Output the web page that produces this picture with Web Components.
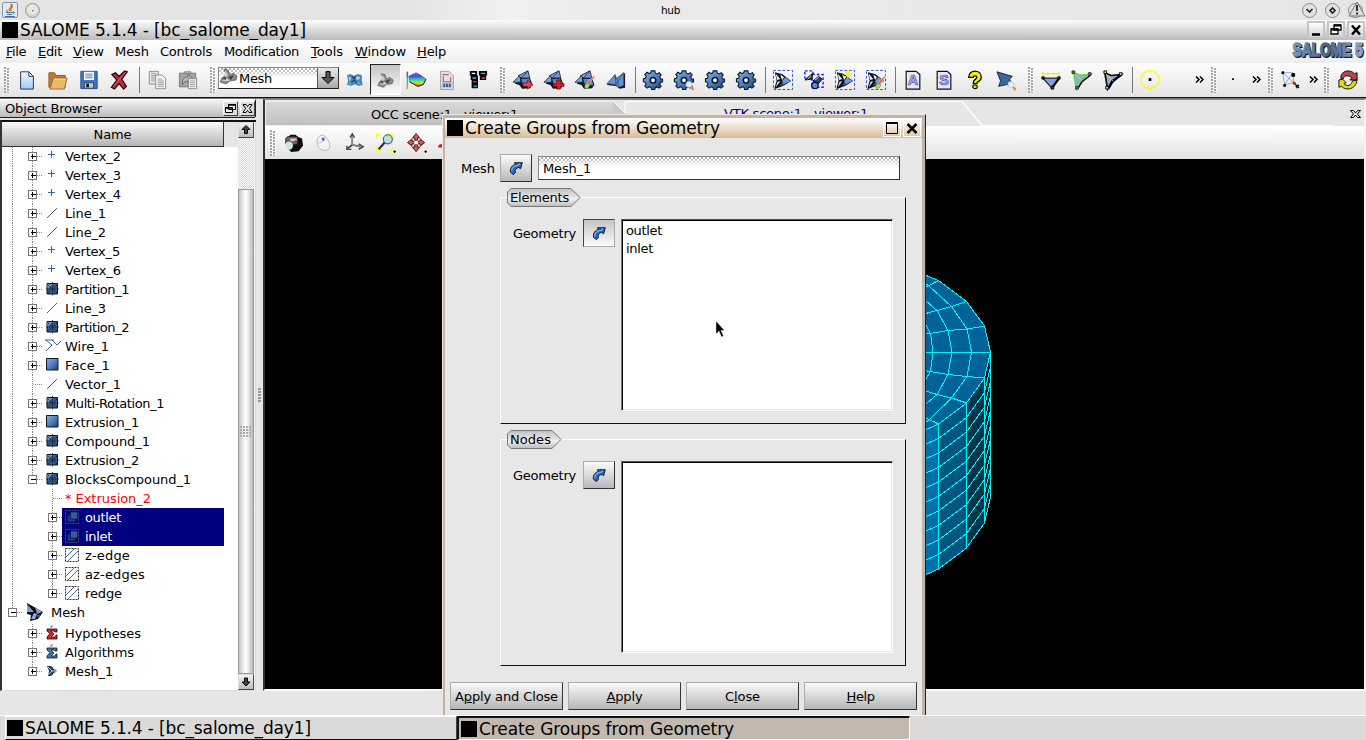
<!DOCTYPE html>
<html lang="en">
<head>
<meta charset="utf-8">
<title>SALOME 5.1.4 - [bc_salome_day1]</title>
<style>
html,body{margin:0;padding:0}
body{width:1366px;height:740px;overflow:hidden;background:#e6e6e6;color:#000;font:13px/19px "DejaVu Sans",sans-serif;position:relative}
</style>
</head>
<body>
<salome-app></salome-app>
<script>
const define=(name,css,html,after)=>customElements.define(name,class extends HTMLElement{
  connectedCallback(){
    if(this.shadowRoot)return;
    const r=this.attachShadow({mode:'open'});
    r.innerHTML='<style>*{box-sizing:border-box}'+css+'</style>'+(typeof html==='function'?html(this):html);
    if(after)after(this,r);
  }
});

/* ---------- icon drawings, all on a 22 x 22 grid ---------- */
const defs='<defs><linearGradient id="b" x1="0" y1="0" x2="1" y2="1"><stop stop-color="#86b2e6"/><stop offset=".55" stop-color="#4f7bb5"/><stop offset="1" stop-color="#1c3b66"/></linearGradient><linearGradient id="p" x1="0" y1="0" x2="0" y2="1"><stop stop-color="#f6fbff"/><stop offset="1" stop-color="#9cc8fa"/></linearGradient><linearGradient id="rb" x1="0" y1="0" x2="0" y2="1"><stop stop-color="#e040c0"/><stop offset=".25" stop-color="#3050f0"/><stop offset=".5" stop-color="#20d8b0"/><stop offset=".75" stop-color="#c8e820"/><stop offset="1" stop-color="#f03020"/></linearGradient></defs>';
const solid='<path d="M2 15L9 7l9 .5 3 8-2 4.500-9 .5-3-4z" fill="#0c1626"/><path d="M0 13.500L8 5.500 8.500 13.500z" fill="#7ba4da" stroke="#16243c" stroke-width=".9"/><path d="M5.500 6.500L16.500 .8 18.500 9 9.500 8.800z" fill="#6f9cd8" stroke="#101c30" stroke-width=".9"/><path d="M8.500 9.500l9.500-.5 3 8-10 1z" fill="#5b86c0" stroke="#101c30" stroke-width=".9"/><path d="M16 1.500l-6.500 7" stroke="#1c2c48" stroke-width=".9"/>';
const gear='<path d="M9 1h4l.6 2.500 2 .9L18 3l2 2.600-1.500 2 .7 2L21.500 10v3l-2.300.7-.8 2L20 18l-2.500 2-2.100-1.400-2 .9L13 21.500H9.500l-.6-2.200-2-.9L4.500 20 2 17.700l1.400-2.200-.8-2L.5 13V9.600L2.700 9l.9-2L2 5l2.300-2.500 2.200 1.400 2-.8z" fill="url(#b)" stroke="#0b1a30" stroke-width="1.200"/><circle cx="11" cy="11.300" r="3" fill="#f4f4f4" stroke="#0b1a30" stroke-width="1.800"/>';
const dashed='<path d="M.5.5h21v21H.5z" fill="none" stroke="#2844cc" stroke-dasharray="3 2"/>';
const arrowMesh='<path d="M2 2.500l8 2 10 7.500-8 5-9 3.500H1.500l2.500-9z" fill="#0c1420"/><path d="M3 4l5 6-3.500 1zM3 19l2-6 3-.5z" fill="#e8eef8"/><path d="M8 5l4 3-2 3z" fill="#fff"/><path d="M10 12l3.500-4 6 4-8 4z" fill="#6e98d4"/><path d="M7 17l4-3 2 1.500z" fill="#4c74b0"/>';
const brush='<path d="M12 17l2-4 7-7 1 1-6 8-2 4z" fill="#e45c5c" stroke="#fff" stroke-width=".5"/><path d="M11 20c-1-5 2-6 5-4 0 3-2 5-5 4z" fill="#a8dc60" stroke="#5c8830" stroke-width=".6"/>';
const lens='<path d="M19 18.500l2.500 3.500" stroke="#ef8030" stroke-width="2.500"/><circle cx="16.500" cy="16" r="3" fill="#dff2ff" stroke="#c4d4e0" stroke-width="1.200"/>';
const I={
 new:'<path d="M4 2h9l5 5v14H4z" fill="url(#p)" stroke="#1a2a50"/><path d="M13 2v5h5z" fill="#fff" stroke="#1a2a50"/>',
 open:'<path d="M1 3h6l2 3h10v13H1z" fill="#b87c2c" stroke="#8a5a1c"/><path d="M6 9h15l-3 12H2z" fill="#e8b868" stroke="#9a6a28"/><path d="M6.500 10h13" stroke="#ffe2a4"/>',
 save:'<path d="M2 1.500h18v19h-18z" fill="#3b76bd" stroke="#1d4a85"/><path d="M5.500 2h11v9h-11z" fill="#f2f7ff"/><path d="M7 4.500h8M7 6.500h8M7 8.500h8" stroke="#5580b0"/><path d="M6 14h10v6H6z" fill="#c8ccc8" stroke="#284878"/><path d="M8 15h3v4H8z" fill="#111"/>',
 del:'<path d="M2 5l4-2 4 4 6-6 3 1-6 8 5 8-3 3-5-6-5 6-3.500-2L7.500 11z" fill="#b82c3c" stroke="#20080c" stroke-width="1.300"/><path d="M3.500 18.500L17 2.500" stroke="#e07880" stroke-width=".8"/>',
 copy:'<g fill="#e6e6e6" stroke="#8a8a8a"><path d="M2.500 1.500h10v14h-10z"/><path d="M9.500 5.500h7l4 4v11h-11z" fill="#f4f4f4"/></g><path d="M4.500 4h6M4.500 6h6M4.500 8h4M4.500 10h4M4.500 12h4M11.500 10h5M11.500 12h7M11.500 14h7M11.500 16h7M11.500 18h7" stroke="#999"/>',
 paste:'<path d="M1.500 3.500h18v15h-18z" fill="#a4a4a4" stroke="#777"/><path d="M7 4V2h7v2z" fill="#ccc" stroke="#777"/><path d="M5 16c-1-7 3-9 6-8V5l6 5-6 5v-3c-3 0-4 1-6 4z" fill="#bbb" stroke="#666"/><path d="M11.500 9.500h9v11h-9z" fill="#f2f2f2" stroke="#888"/><path d="M13 12h6M13 14h6M13 16h6M13 18h6" stroke="#999"/>',
 geo:'<path d="M4 6l3-1 4 2 4-2 4 1v6l1 4-4 1-4-2-4 2-4-1 1-4z" fill="#4f86b8" stroke="#34648c" stroke-width=".8"/><path d="M5 7l3 2-2 4zM14 7l4 1-2 3-3-1z" fill="#a8d4f2"/><path d="M4 16l3-3 2 3zM14 15l2-3 3 4z" fill="#48b4d4"/><path d="M8 14l3-3 3 3M9 7l2 3 2-3" stroke="#1c4064" fill="none" stroke-width="1.200"/>',
 meshg:'<path d="M7 4l4 1 2 5 3-2 4 3-1 4-6 1-4 3-6-2 2-4 4-3z" fill="#8c8c8c" stroke="#555" stroke-width=".7"/><path d="M8 5l3 5-3 3zM5 16l5-3 3 3z" fill="#d0d0d0"/><path d="M11 12l6-2-3 5zM5 13l4-1v3z" fill="#444"/>',
 visu:'<path d="M1.500 2v19" stroke="#20c0a0" stroke-width="1.500"/><path d="M1.500 2v6" stroke="#b030d0" stroke-width="1.500"/><path d="M1.500 16v5" stroke="#f0a020" stroke-width="1.500"/><path d="M3 7l8-4 4 2 7 5-3 6-6 2-9-5z" fill="url(#rb)" stroke="#333" stroke-width=".5"/><path d="M4 13l9 5 6-2 3-6" stroke="#222" fill="none"/>',
 med:'<path d="M4 1.500h9l5 5v15H4z" fill="#dfe2e8" stroke="#999"/><path d="M6 5h7M7 7v6h8V8" stroke="#c0605c" stroke-width="1.300" fill="none"/><path d="M5 14h12v6H5z" fill="#b8c8dc"/><path d="M7 17h9" stroke="#3450a0" stroke-width="3.500" stroke-dasharray="2 1"/>',
 yacs:'<path d="M2 1h8v5H2zM12 1h9v5h-9zM3 6h8v5H3zM13 6h7v5h-7zM4 11h7v4H4zM4 15h7v5H4z" fill="#000"/><path d="M4 3h4v1.500H4z" fill="#fff"/><path d="M14 3h5v1.500h-5zM5 8h4v1.500H5zM6 17h4v1.500H6z" fill="#38b0ff"/><path d="M15 8h4v1.500h-4zM5.500 12h4v1.500h-4z" fill="#f04038"/>',
 m1:solid+'<path d="M11 14h5v-3l6 5-6 5v-3h-5z" fill="#e04848" stroke="#701010" stroke-width=".8"/>',
 m2:solid+'<path d="M14 11h4v4h4v3h-4v3h-4v-3h-4v-3h4z" fill="#e02028" stroke="#600" stroke-width=".8"/>',
 m3:solid+brush,
 m4:'<path d="M1 16.500L11 6l1 5 9-8v16.500l-6 1-4-3z" fill="#0f1a2c"/><path d="M1 15L10 5l.5 5L19.500 3v14l-6 2-3.500-3z" fill="#6491cf" stroke="#2c4468" stroke-width=".8"/><path d="M10 5l1 11M19 3l-8 13M12 9l2 9" stroke="#2c4468" fill="none" stroke-width=".8"/>',
 g1:gear,g2:gear+lens,
 sel1:dashed+arrowMesh,
 sel2:'<path d="M1 1h9v8H1z" fill="none" stroke="#2020e8" stroke-width="1.500" stroke-dasharray="3 2"/><path d="M9 5h12v14H9z" fill="#eef" stroke="#2020e8" stroke-width="1.500" stroke-dasharray="3 2"/><path d="M1 11l8-7v6zM10 12l6-5 4 3-4 5z" fill="#2b4770" stroke="#000"/><path d="M4 10l4-4M12 11l4-3" stroke="#d8e4f8"/><circle cx="12" cy="17" r="3.500" fill="#5c98cc" stroke="#00105c" stroke-width="1.500"/>',
 sel3:dashed+arrowMesh+'<path d="M14 0v9M9.500 4.500h9M11 1l6 7M17 1l-6 7" stroke="#f4ee28" stroke-width="1.200"/>',
 sel4:dashed+arrowMesh+brush,
 A:'<path d="M3.500 1.500h11l4 3.500v16h-15z" fill="#e6e6f6" stroke="#111" stroke-width="1.300"/><text x="11" y="17" text-anchor="middle" font-family="Liberation Sans" font-weight="bold" font-size="16" fill="#b4b8f0" stroke="#5050a8" stroke-width=".8">A</text>',
 S:'<path d="M3.500 1.500h11l4 3.500v16h-15z" fill="#e6e6f6" stroke="#111" stroke-width="1.300"/><text x="11" y="17" text-anchor="middle" font-family="Liberation Sans" font-weight="bold" font-size="16" fill="#b4b8f0" stroke="#5050a8" stroke-width=".8">S</text>',
 help:'<path d="M4 8c0-9 14-9 14 0 0 5-5 4-5 7H9c0-6 4-4 4-7 0-2-4-2-4 0z" fill="#f0f000" stroke="#000" stroke-width="1.400"/><ellipse cx="11" cy="18.500" rx="2.500" ry="2" fill="#f0f000" stroke="#000" stroke-width="1.200"/>',
 whats:'<path d="M1 2l17 5-3 3 3 7-6-1-9 2 2-6z" fill="#3d6799" stroke="#13253d"/>'+lens,
 q1:'<path d="M2 9h18l-8 11z" fill="#7ba3dc" stroke="#222" stroke-width="1.300"/><path d="M20 9l-8 11" stroke="#000" stroke-width="2.500"/><path d="M2 2v5M2 4h18M20 2v5M8 3v3M14 3v3" stroke="#eeee00" fill="none" stroke-width="1.300"/><g fill="#444" stroke="#000"><path d="M1 7.500h2.500v2.500H1zM18.500 7.500h2.500v2.500h-2.500zM11 18h3v3h-3z"/></g>',
 q2:'<path d="M2 3l7 3 11-1-10 7-5 9z" fill="#8aaede" stroke="#6fd040" stroke-width="2"/><path d="M20 6l-9 7-5 8" stroke="#000" fill="none" stroke-width="1.500"/><path d="M3 4l8 8" stroke="#e8d040"/><path d="M0 1h3v3H0zM18 3h3v3h-3zM4 18h3v3H4z" fill="#666" stroke="#333"/>',
 q3:'<path d="M2 3l7 3 11-1-10 7-5 9z" fill="#8aaede" stroke="#000" stroke-width="1.800"/><path d="M20 6l-9 7-5 8" stroke="#000" fill="none" stroke-width="1.500"/><path d="M3 4l8 8" stroke="#e8d040"/><path d="M1 1h3v3H1zM18 3h3v3h-3zM3 18h3v3H3z" fill="#d8d8a0" stroke="#000"/>',
 pt:'<circle cx="11" cy="10.500" r="10" fill="none" stroke="#fafa00" stroke-width="1.300"/><path d="M9.500 9h3v3h-3z"/>',
 dot:'<path d="M10 9h2v2h-2z"/>',
 net:'<path d="M2 3h11l1 11-10 2zM2 3l12 11M13 3L4 16" fill="none" stroke="#78a8dc"/><path d="M1 2h2v2H1zM12 4h3v3h-3zM3 16h2v2H3z" stroke="#000"/><path d="M13 13h3v3h-3z" fill="#f00"/><path d="M15 15l5 5m-4-2l4-1m-3 3l2-4" stroke="#000" stroke-width="1.200"/>',
 refresh:'<path d="M3 9C3 0 14-1 18 4l3-1v8h-8l2.500-2.500C12 6 7 5 6 9.500z" fill="#b84848" stroke="#000"/><path d="M21 11c-1 11-13 12-17 7l-3 1v-8l4-1 4 4-2.500 1c4 4 8 2 9.500-3z" fill="#dede18" stroke="#000"/>',
 camera:'<path d="M5 6l3-4h6l2 2 5 2 1 8-5 6-8 1-5-5z" fill="#0a0a0a"/><path d="M3 6l2-2h11v8l-9 2-4-2z" fill="#666" stroke="#222"/><circle cx="6.500" cy="14" r="4" fill="#cbe4ea" stroke="#eee" stroke-width=".8"/><path d="M8 6h7v3H8z" fill="#ccc"/><path d="M13 8h3v2h-3z" fill="#d22"/>',
 mouse:'<path d="M4 6c3-6 9-4 12 3 4 8-1 11-6 10S2 12 4 6z" fill="#f4f4f6" stroke="#b0b0b0"/><path d="M5 11c4 0 7-3 7-7" stroke="#bbb" fill="none"/><path d="M9 5.500l2 3" stroke="#4868c0" stroke-width="2.500"/>',
 axes:'<path d="M8 2v11l9 2M8 13l-5 4" stroke="#333" stroke-width="1.800" fill="none"/><path d="M5.500 5L8 1l2.500 4M15 12l5 3-5 3M2 14v4h5" fill="none" stroke="#3c4638" stroke-width="1.500"/><path d="M8 3v10l8 2" stroke="#d0d8b8" fill="none" stroke-width=".8"/>',
 fit:'<path d="M1 6V1.500h4M15 1.500h4v4M1 15v4h4M15 19h4v-3" stroke="#ff0" stroke-width="1.500" fill="none"/><path d="M10 10l-7 8" stroke="#333" stroke-width="2.500"/><circle cx="13" cy="7" r="5" fill="#b8dce4" stroke="#45606a" stroke-width="1.200"/><path d="M19 20.500h3M20.500 19v3" stroke="#000"/>',
 pan:'<g fill="#d05858" stroke="#401010"><path d="M10 .5l4 5h-2.500v3h-3v-3H6zM10 20.500l4-5h-2.500v-3h-3v3H6zM.5 10.500l5-4v2.500h3v3h-3v2.500zM19.500 10.500l-5-4v2.500h-3v3h3v2.500z"/></g><path d="M8 8.500h4v4H8z" fill="#fff"/><path d="M19 20.500h3M20.500 19v3" stroke="#000"/>',
 rot:'<path d="M0 15l2-3 5 1v3H0z" fill="#c22"/>',
 pick:'<path d="M6 20L2 16C1.500 10 5 6 9.500 5L8 2.500h11.500L17 11.500l-2.500-2C11 10 8 13 9.500 17z" fill="#2e66b8" stroke="#060c18" stroke-width="1.300"/><path d="M4 15c0-5 3-8 9-8.500l3-2.500" stroke="#6cb4fa" stroke-width="1.800" fill="none"/>',
 vertex:'<path d="M10.500 6v7M7 9.500h7" stroke="#3c648c" shape-rendering="crispEdges"/>',
 line:'<path d="M6 16L16 6" stroke="#4c6484" fill="none"/>',
 part:'<path d="M6 5.500h10.500v10.500H6z" fill="#365c8c" stroke="#0a1424"/><path d="M6.500 6h5l-5 5z" fill="#7897bc"/><path d="M7 7l9 8M16 7L7 15M5 11h13M11.500 4v14" stroke="#0e1b2c" fill="none" stroke-width=".8" stroke-dasharray="2 .7"/>',
 wire:'<path d="M4 5h9M5 5l6 5-6 6M11 5l5 5 4-4" fill="none" stroke="#3c648c"/>',
 face:'<path d="M5.500 4.500h11.500v11.500h-11.500z" fill="url(#b)" stroke="#0c1c30"/>',
 group:'<path d="M4.500 4.500h13v13h-13z" fill="none" stroke="#444a70" stroke-dasharray="2 1"/><path d="M6.500 9h8v7h-8z" fill="#1c3874" stroke="#0a1450" stroke-width=".6"/><path d="M9.500 6h7v7h-7z" fill="#3459a0" stroke="#0a1450" stroke-width=".7"/>',
 edge:'<path d="M4.500 4.500h13v13h-13z" fill="none" stroke="#333" stroke-dasharray="2 1"/><path d="M5 13l8-8M7 17L17 7" stroke="#4c6c94"/>',
 meshroot:'<path d="M4 2l7 4 9 5-5 7-8 2 1-6-4-1z" fill="#0a0e14"/><path d="M4 3l7 8H4zM12 6l7 5-5 2z" fill="#7ea0cc"/><path d="M8 18l3-6 3 1-2 5z" fill="#8cb0dc"/><path d="M14 14h4l-3 4z" fill="#3a5c88"/>',
 hyp:'<path d="M6 7h10v3h-2l-1-1h-3l3 3-3 3h4l1-2h1v4H6v-2l3-3.500-3-2.500z" fill="#c62c2c" stroke="#2c0808" stroke-width=".8"/><path d="M10 6V4h2" stroke="#777" fill="none"/>',
 alg:'<path d="M6 7h10v3h-2l-1-1h-3l3 3-3 3h4l1-2h1v4H6v-2l3-3.500-3-2.500z" fill="#3e78ae" stroke="#0a1830" stroke-width=".8"/><path d="M10 6V4h2" stroke="#777" fill="none"/>',
 mesh1:'<path d="M6 6h4l6 5-6 5H7l1-5z" fill="#2a3a50"/><path d="M7 7l4 4-4 4M12 8l4 3-4 3M11 11h4" stroke="#b8cce8" fill="none"/>'
};
define('ui-icon',':host{display:block;width:22px;height:22px;flex:none}svg{display:block;overflow:visible;width:100%;height:100%}',
  e=>`<svg viewBox="0 0 22 22" fill="none">${defs}<g fill="#000">${I[e.getAttribute('name')]||''}</g></svg>`);

/* label spread evenly over a given advance width */
define('ui-text',':host{display:block;white-space:nowrap;flex:none}span{display:inline-block;white-space:pre}','<span><slot></slot></span>',(e,r)=>{
  const w=+e.getAttribute('w'),s=r.querySelector('span');
  if(w){const n=e.textContent.length,k=s.getBoundingClientRect().width;s.style.letterSpacing=((w-k)/n).toFixed(3)+'px';}
});

define('tool-btn',':host{display:flex;width:31px;height:31px;align-items:center;justify-content:center;flex:none}ui-icon{width:20px;height:20px;margin-right:1px}:host([on]){border:1px solid;border-color:#222 #fff #fff #222;background:linear-gradient(#c4c4c4,#fdfdfd)}',
  e=>`<ui-icon name="${e.getAttribute('i')}"></ui-icon>`);
define('tool-sep',':host{display:block;width:6px;height:26px;flex:none;background:linear-gradient(#777,#777) 3px 0/1px 100% no-repeat}','');
define('tool-grip',':host{display:block;width:6px;height:26px;flex:none}svg{display:block}',
  '<svg width="6" height="26" shape-rendering="crispEdges"><path d="M2 1v25M5 2v24" stroke="#fff" stroke-width="2" stroke-dasharray="2 1"/><path d="M1 0v26M4 1v25" stroke="#a4a4a4" stroke-width="2" stroke-dasharray="2 1"/></svg>');
define('tool-more',':host{display:flex;width:12px;flex:none;height:20px}svg{margin:auto}','<svg width="9" height="7" fill="none" stroke="#000" stroke-width="1.500"><path d="M1 .5l3 3-3 3M5 .5l3 3-3 3"/></svg>');
define('gap-x',':host{display:block;flex:none}','',e=>e.style.width=e.getAttribute('w')+'px');

define('hub-bar',':host{display:flex;height:20px;align-items:center;background:linear-gradient(90deg,#e4e4e4 30%,#f0f0f0 37%,#eaeaea 45%,#e6e6e6);position:relative;font:10.500px "DejaVu Sans",sans-serif}svg{display:block}.h{flex:1;display:flex;justify-content:center;padding-right:2px}',
`<gap-x w="2"></gap-x><svg width="17" height="17"><rect x=".5" y=".5" width="15" height="15" rx="1.500" fill="#dfe9f2" stroke="#7c9ab4"/><path d="M8 9c-3-3 3-3 1-7 4 3-2 4 0 7M5 8c-1 1 0 1 1 2" stroke="#e07020" fill="none" stroke-width="1.300"/><path d="M4 10.500h7M5 12.500h5M3 14.500h10M11 10q3 0 0 2" stroke="#456e98" fill="none"/></svg><gap-x w="6"></gap-x>
<svg width="16" height="17"><circle cx="7.500" cy="8.500" r="7" fill="#d4d4d4" stroke="#999"/><circle cx="7.500" cy="7.500" r="5" fill="#e8e8e8"/><path d="M7 8h1.500v1.500H7z" fill="#777"/></svg>
<div class="h"><ui-text w="19">hub</ui-text></div>
<svg width="64" height="19"><g fill="#e2e2e2" stroke="#888"><circle cx="7.500" cy="9.500" r="7"/><circle cx="30.500" cy="9.500" r="7"/><circle cx="53.500" cy="9.500" r="7"/></g><path d="M4.500 8l3 3 3-3M28 9.500l2.500-2.500 2.500 2.500-2.500 2.500z" fill="none" stroke="#222" stroke-width="1.600"/><path d="M55 1l8 14H47z" fill="#dadada" stroke="#777"/><path d="M55 4v6M55 11.500v2" stroke="#333" stroke-width="2"/></svg>`);

define('win-title',':host{display:flex;height:20px;align-items:center;background:linear-gradient(#fdfdfd,#bababa);font-size:17px;line-height:20px;padding:0 1px 0 2px}b{width:16px;height:16px;background:#000;margin-right:2px}.s{flex:1}.w{width:18px;height:18px;background:linear-gradient(#fff,#d0d0d0);border:2px solid #c4c4c4;margin-left:2px}svg{display:block}',
`<b></b><ui-text w="286">SALOME 5.1.4 - [bc_salome_day1]</ui-text><div class="s"></div>
<div class="w"><svg width="14" height="14"><path d="M3 11.500h8" stroke="#000" stroke-width="2.500"/></svg></div>
<div class="w"><svg width="14" height="14" fill="#f4f4f4" stroke="#000" stroke-width="1.300"><path d="M5 2h7v5H5zM2 6h7v5H2z"/><path d="M5 2.500h7M2 6.500h7" stroke-width="2"/></svg></div>
<div class="w"><svg width="14" height="14"><path d="M3 2.500l8 9M11 2.500l-8 9" stroke="#000" stroke-width="2.500"/></svg></div>`);

define('menu-bar',':host{display:flex;height:23px;background:linear-gradient(#fff,#ededed);line-height:23px}.logo{margin-left:auto;overflow:visible}',
`<gap-x w="6"></gap-x><ui-text w="20"><u>F</u>ile</ui-text><gap-x w="12"></gap-x><ui-text w="24"><u>E</u>dit</ui-text><gap-x w="11"></gap-x><ui-text w="31"><u>V</u>iew</ui-text><gap-x w="11"></gap-x><ui-text w="34">Mesh</ui-text><gap-x w="11"></gap-x><ui-text w="52">Controls</ui-text><gap-x w="12"></gap-x><ui-text w="75">Modification</ui-text><gap-x w="12"></gap-x><ui-text w="32"><u>T</u>ools</ui-text><gap-x w="12"></gap-x><ui-text w="51"><u>W</u>indow</ui-text><gap-x w="11"></gap-x><ui-text w="29"><u>H</u>elp</ui-text>
<svg class="logo" width="76" height="23"><defs><linearGradient id="l" x1="0" y1="0" x2="1" y2="0"><stop stop-color="#7894bc"/><stop offset=".5" stop-color="#53617a"/><stop offset="1" stop-color="#8ca8d4"/></linearGradient></defs><g font-family="Liberation Sans" font-weight="bold" font-size="18"><text x="3.500" y="17" textLength="70" lengthAdjust="spacingAndGlyphs" fill="#161a24" stroke="#161a24" stroke-width="1.800">SALOME 5</text><text x="2.500" y="16" textLength="70" lengthAdjust="spacingAndGlyphs" fill="url(#l)" stroke="url(#l)" stroke-width="1.500">SALOME 5</text></g></svg>`);

const dots='repeating-conic-gradient(#a8a8a8 0 25%,#fff 0 50%) 0 0/4px 4px';
define('module-combo',`:host{display:flex;width:121px;height:22px;margin-bottom:3px;flex:none;border:1px solid;border-color:#888 #333 #222 #888;background:#fff;position:relative}.t{position:absolute;inset:0 0 auto 0;height:10px;background:${dots};-webkit-mask:linear-gradient(#000,transparent);mask:linear-gradient(#000,transparent)}ui-icon{margin:-3px 0 0 -2px}ui-text{position:relative;line-height:21px}.b{margin-left:auto;width:21px;background:linear-gradient(#e8e8e8,#a8a8a8);border-left:1px solid #555;position:relative}`,
`<div class="t"></div><ui-icon name="meshg" style="position:relative"></ui-icon><ui-text w="33">Mesh</ui-text><div class="b"><svg width="19" height="20"><path d="M8 3.500h4v6h4L10 15.500 4 9.500h4z" fill="#555" stroke="#000"/></svg></div>`);

const tb=a=>a.split(' ').map(n=>`<tool-btn i="${n}"></tool-btn>`).join('');
define('main-toolbar',':host{display:flex;height:35px;align-items:center;background:linear-gradient(#fdfdfd,#e4e4e4);border-bottom:1px solid #111;padding-bottom:1px}',
`<gap-x w="4"></gap-x><tool-grip></tool-grip><gap-x w="2"></gap-x>${tb('new open save del')}<tool-sep></tool-sep>${tb('copy paste')}<gap-x w="6"></gap-x><tool-grip></tool-grip><gap-x w="2"></gap-x><module-combo></module-combo>${tb('geo')}<tool-btn i="meshg" on></tool-btn>${tb('visu med yacs')}<gap-x w="6"></gap-x><tool-grip></tool-grip><gap-x w="2"></gap-x>${tb('m1 m2 m3 m4')}<tool-sep></tool-sep>${tb('g1 g2 g1 g1')}<tool-sep></tool-sep>${tb('sel1 sel2 sel3 sel4')}<tool-sep></tool-sep>${tb('A S help whats')}<gap-x w="6"></gap-x><tool-grip></tool-grip><gap-x w="2"></gap-x>${tb('q1 q2 q3')}<tool-sep></tool-sep>${tb('pt')}<gap-x w="27"></gap-x><tool-more></tool-more><gap-x w="6"></gap-x><tool-grip></tool-grip><gap-x w="1"></gap-x>${tb('dot')}<gap-x w="1"></gap-x><tool-more></tool-more><gap-x w="6"></gap-x><tool-grip></tool-grip><gap-x w="2"></gap-x>${tb('net')}<tool-more></tool-more><gap-x w="5"></gap-x><tool-grip></tool-grip><gap-x w="3"></gap-x>${tb('refresh')}`);

/* ---------- object browser ---------- */
define('tree-row',':host{display:flex;height:19px;align-items:center;position:relative;flex:none}:host([lvl="0"]){height:21px}:host([lvl="0"]) .c{height:18px;align-self:flex-start}.g{flex:none;align-self:stretch;display:block}.c{display:flex;align-items:center;height:100%}ui-icon{margin:-1px 2px 0 -1px}:host([sel]) .c{background:#000080;color:#fff;flex:none;width:162px}:host([bad]) .c{color:#f00}',
e=>{
  const l=+e.getAttribute('lvl'),a=n=>e.hasAttribute(n),cx=l*20+10.5,W=l*20+20,H=l?19:21,m=9.5;
  let d='';
  if(a('root'))d+=`M10.5 0V${H}`;
  if(l===2||l===1){d+=`M${cx} 0V${a('last')?m:H}`;}
  if(l===0)d+=`M10.5 0V9`;
  d+=`M${cx} ${m}H${W+(l?0:2)}`;
  let x='';
  if(!a('leaf'))x=`<rect x="${cx-4}" y="${m-4}" width="8" height="8" fill="#fff" stroke="#777"/><path d="M${cx-2} ${m}h5${a('open')?'':`M${cx} ${m-2.500}v5`}" stroke="#000"/>`;
  const pre=l===0?20:l*20+20;
  return `<svg class="g" width="${pre}" height="${H}" shape-rendering="crispEdges"><path d="${d}" stroke="#888" stroke-dasharray="1 1" fill="none"/>${x}</svg><div class="c">${a('noicon')?'<gap-x w="3"></gap-x>':`${l===0?'<gap-x w="2"></gap-x>':''}<ui-icon name="${e.getAttribute('i')}"></ui-icon>`}${l===0?'<gap-x w="4"></gap-x>':''}<ui-text w="${e.getAttribute('w')}">${e.getAttribute('t')}</ui-text></div>`;
});
const rows=[['Vertex_2','vertex',56],['Vertex_3','vertex',56],['Vertex_4','vertex',56],['Line_1','line',41],['Line_2','line',41],['Vertex_5','vertex',55],['Vertex_6','vertex',56],['Partition_1','part',64],['Line_3','line',41],['Partition_2','part',64],['Wire_1','wire',44],['Face_1','face',45],['Vector_1','line',56,'leaf'],['Multi-Rotation_1','part',99],['Extrusion_1','face',74],['Compound_1','part',85],['Extrusion_2','part',74],['BlocksCompound_1','part',126,'open last']]
 .map(r=>`<tree-row lvl="1" root t="${r[0]}" i="${r[1]}" w="${r[2]}" ${r[3]||''}></tree-row>`).join('')
 +[['* Extrusion_2','x',86,'leaf bad noicon'],['outlet','group',36,'sel'],['inlet','group',27,'sel'],['z-edge','edge',45],['az-edges','edge',60],['redge','edge',37,'last']]
 .map(r=>`<tree-row lvl="2" root t="${r[0]}" i="${r[1]}" w="${r[2]}" ${r[3]||''}></tree-row>`).join('')
 +'<tree-row lvl="0" open t="Mesh" i="meshroot" w="34"></tree-row>'
 +[['Hypotheses','hyp',76],['Algorithms','alg',69],['Mesh_1','mesh1',48,'last']].map(r=>`<tree-row lvl="1" t="${r[0]}" i="${r[1]}" w="${r[2]}" ${r[3]||''}></tree-row>`).join('');

define('scroll-bar',`:host{display:flex;flex-direction:column;width:16px;flex:none;background:repeating-conic-gradient(#d8d8d8 0 25%,#fff 0 50%) 0 0/2px 2px}.b{height:16px;border:1px solid;border-color:#ddd #444 #444 #ddd;background:linear-gradient(#f4f4f4,#bbb)}.th{margin-top:51px;flex:1;border:1px solid #999;background:linear-gradient(90deg,#c4c4c4,#fff 45%,#f4f4f4 60%,#b8b8b8);display:flex;align-items:center;justify-content:center}svg{display:block}`,
`<div class="b"><svg width="14" height="14"><path d="M7 2.500l4 4H8.500v4h-3v-4H3z" fill="#444" stroke="#000"/></svg></div><div class="th"><svg width="12" height="12" shape-rendering="crispEdges"><path d="M0 1h12M0 4h12M0 7h12M0 10h12" stroke="#aaa" stroke-width="2" stroke-dasharray="2 1"/></svg></div><div class="b"><svg width="14" height="14"><path d="M7 11L3 7h2.500V3h3v4H11z" fill="#444" stroke="#000"/></svg></div>`);

define('object-browser',`:host{display:flex;flex-direction:column;width:256px;flex:none}
.t{display:flex;width:256px;height:18px;align-items:center;background:linear-gradient(#f2f2f2,#bcbcbc);padding-left:5px;border-right:1px solid #222;border-top:1px solid #fff}
.t i{display:block;width:15px;height:15px;border:1px solid;border-color:#fff #444 #444 #fff;background:#dcdcdc;margin-left:2px}.t ui-text{flex:1}.t svg{display:block}
.p{margin-top:0;border-top:1px solid #222;height:3px;background:#e6e6e6;flex:none;width:255px}
.f{display:flex;flex:1;border-left:2px solid #333;border-top:2px solid #111;border-bottom:1px solid #ddd;background:#fff;min-height:0}
.r{width:2px;background:#f4f4f4;border-right:1px solid #ddd;flex:none}
.l{flex:1;display:flex;flex-direction:column;min-width:0}.h{display:flex;background:#e6e6e6;height:25px;flex:none}.h div{width:222px;background:linear-gradient(#fafafa,#b4b4b4);border-right:1px solid #333;border-bottom:1px solid #333;display:flex;justify-content:center;align-items:center}`,
`<div class="t"><ui-text w="97">Object Browser</ui-text><i><svg width="13" height="13" fill="#eee" stroke="#000"><path d="M4.500 2.500h7v5h-7zM1.500 5.500h7v5h-7z"/><path d="M4 3h8M1 6h8" stroke-width="1.500"/></svg></i><i><svg width="13" height="13" fill="none" stroke="#000"><path d="M2 2.500h3l1.500 2 1.500-2h3L8.500 6.500l2.500 4H8l-1.500-2-1.500 2H2l2.500-4z"/></svg></i></div><div class="p"></div>
<div class="f"><div class="l"><div class="h"><div><ui-text w="38">Name</ui-text></div></div>${rows}</div><scroll-bar></scroll-bar><div class="r"></div></div>`);

/* ---------- 3D viewer with the meshed cylinder ---------- */
const mesh=(()=>{
  const P=[[925,430],[938.5,424],[966.5,403],[984.5,378],[990.5,352]],h=14.5;
  const fills=['#0070a8','#005680','#00364c','#001820'];let s='';
  for(let i=0;i<4;i++){const[a,b]=[P[i],P[i+1]];s+=`<path d="M${a}L${b}V${b[1]+10*h}L${a[0]} ${a[1]+10*h}z" fill="${fills[i]}"/>`;}
  s+='<path d="M925 275L938.500 280.500 966.500 301.500 984.500 326 990.500 352 984.500 378 966.500 403 938.500 424 925 430H900V275z" fill="#006398"/>';
  let d='M925 275L938.500 280.500 966.500 301.500 984.500 326 990.500 352';
  for(let k=0;k<=10;k++)d+='M'+P.map(p=>p[0]+' '+(p[1]+k*h)).join('L');
  for(const p of P.slice(1))d+=`M${p}v${10*h}`;
  d+='M920 352H990.500M984.500 326L967 329 948 330.500 930.500 333.500 920 334M984.500 378L967 376.500 948 374.500 930.500 371.500 920 370M966.500 301.500L951.500 306.500 937 310.500 920 315M966.500 403L951.500 398 937 394.500 920 389M938.500 280.500L920 290M938.500 424L920 415';
  d+='M918 279L929 286 951.500 306.500 967 329 971.500 352 967 376.500 951.500 398 929 420 918 427M918 295L926 301 937 310.500 948 330.500 952 352 948 374.500 937 394.500 926 404M924 322L930.500 333.500 933 352 930.500 371.500 924 382';
  return s+`<path d="${d}" fill="none" stroke="#00f4f4" stroke-width="1" shape-rendering="crispEdges"/>`;
})();
define('view-area',`:host{display:flex;flex:1;flex-direction:column;min-width:0;border-left:2px solid #333;border-top:1px solid #888;border-right:2px solid #f4f4f4;border-bottom:2px solid #fff;padding-top:1px}
.tabs{display:flex;height:25px;position:relative;flex:none}.tabs svg{display:block;flex:none}.a{width:348px;height:25px;background:linear-gradient(#d8d8d8,#c0c0c0);border:1px solid #eee;border-right:0;display:flex;padding-left:105px;line-height:26px}.v{width:336px;border-top:1px solid #fff;color:#000080;display:flex;padding-left:98px;line-height:24px}.bl{flex:1;border-bottom:1px solid #fff;margin-right:16px}.x{align-self:center;margin-right:3px}
.tb{display:flex;height:33px;align-items:center;background:linear-gradient(#fff,#e2e2e2);border-top:1px solid #fff;flex:none;padding-bottom:1px}.view{flex:1;background:#000;min-height:0;overflow:hidden}.view svg{display:block}`,
`<div class="tabs"><div class="a"><ui-text w="147">OCC scene:1 - viewer:1</ui-text></div><svg width="13" height="25"><path d="M0 0l12 12v13H0z" fill="#c8c8c8"/><path d="M0 0l12 12V0" stroke="#fff" fill="none"/></svg><div class="v"><ui-text w="144">VTK scene:1 - viewer:1</ui-text></div><svg width="22" height="25" style="overflow:visible"><path d="M0 .5L20 24.500h2" stroke="#fff" fill="none" stroke-width="1.200"/></svg><div class="bl"></div><svg class="x" width="11" height="10" fill="none" stroke="#000"><path d="M.5 1.500h3l2 2.500 2-2.500h3L7.500 5l3 3.500h-3l-2-2.500-2 2.500h-3L3.500 5z"/></svg></div>
<div class="tb"><gap-x w="5"></gap-x><tool-grip></tool-grip><gap-x w="2"></gap-x>${tb('camera mouse axes fit pan rot')}</div>
<div class="view"><svg width="1098" height="530" viewBox="265 159 1098 530">${mesh}</svg></div>`);

/* ---------- dialog ---------- */
define('pick-btn',':host{display:flex;width:32px;height:28px;flex:none;border:1px solid;border-color:#aaa #333 #333 #aaa;background:linear-gradient(#fafafa,#b8b8b8);align-items:center;justify-content:center}:host([on]){border-color:#444 #aaa #aaa #444;background:linear-gradient(#c4c4c4,#fafafa)}svg{display:block}',
`<svg width="15" height="15" viewBox="0 0 22 22">${I.pick}</svg>`);
define('geo-group',`:host{display:block;height:227px;position:relative;border:1px solid;border-color:#fff #111 #111 #fff;margin-left:55px;width:406px}
.tag{position:absolute;left:6px;top:-10px;height:20px}.tag svg{position:absolute;left:0;top:0}.tag ui-text{position:relative;padding-left:3px;line-height:19px}
.r{display:flex;padding:21px 0 0 12px}.r>ui-text{line-height:30px;width:70px}.list{margin-left:6px;width:272px;height:192px;background:#fff;border:1px solid;border-color:#555 #fff #fff #777;box-shadow:inset 1px 1px #000,inset -1px -1px #e6e6e6;padding:2px 4px;line-height:18px}`,
e=>{const w=+e.getAttribute('tw');return `<div class="tag"><svg width="${w+2}" height="21"><defs><linearGradient id="t" x1="0" y1="0" x2="0" y2="1"><stop stop-color="#c0c0c0"/><stop offset=".6" stop-color="#eee"/><stop offset="1" stop-color="#bbb"/></linearGradient></defs><path d="M4 .5H${w-9}L${w} 9.500L${w-9} 18.500H4L.5 15V4z" fill="url(#t)" stroke="#777"/></svg><ui-text w="${e.getAttribute('lw')}">${e.getAttribute('label')}</ui-text></div><div class="r"><ui-text w="63">Geometry</ui-text><pick-btn ${e.hasAttribute('on')?'on':''}></pick-btn><div class="list"><slot></slot></div></div>`;});
define('push-btn',':host{display:flex;width:113px;height:28px;border:1px solid;border-color:#aaa #333 #333 #aaa;background:linear-gradient(#fafafa,#b6b6b6);align-items:center;justify-content:center}','<slot></slot>');
define('group-dialog',`:host{display:block;position:absolute;left:442px;top:114px;width:484px;height:601px;background:#e7e7e7;border:solid;border-width:1px 1px 0 1px;border-color:#efe6dc #222 #222 #efe6dc;box-sizing:border-box;z-index:2}
.o{border:solid #bfb4a9;border-width:3px 3px 0 2px;height:600px}.t{display:flex;height:20px;align-items:center;background:linear-gradient(#fff,#d8bc98);font-size:17px;line-height:20px;padding:0 1px 0 2px}b{width:16px;height:16px;background:#000;margin-right:2px}.s{flex:1}.w{width:18px;height:18px;border:1px solid #fff;background:linear-gradient(#fff,#e2c8a8);margin-left:2px}.w svg{display:block}
.m{display:flex;align-items:center;padding:16px 0 0 16px;height:44px}.in{margin-left:6px;width:362px;height:24px;background:#fff;border:1px solid;border-color:#888 #333 #333 #888;position:relative;padding-left:4px;line-height:23px}.d{position:absolute;inset:0 0 auto 0;height:10px;background:${dots};-webkit-mask:linear-gradient(#000,transparent);mask:linear-gradient(#000,transparent)}.in ui-text{position:relative}.m pick-btn{margin-left:5px}.btns{display:flex;gap:5px;padding:16px 0 0 5px}`,
`<div class="o"><div class="t"><b></b><ui-text w="255">Create Groups from Geometry</ui-text><div class="s"></div><div class="w"><svg width="16" height="16"><path d="M2.500 2.500h11v11h-11z" fill="none" stroke="#000"/><path d="M2 3h12" stroke="#000" stroke-width="2"/></svg></div><div class="w"><svg width="16" height="16"><path d="M3.500 4l9 9M12.500 4l-9 9" stroke="#000" stroke-width="2.500"/></svg></div></div>
<div class="m"><ui-text w="34">Mesh</ui-text><pick-btn></pick-btn><div class="in"><div class="d"></div><ui-text w="48">Mesh_1</ui-text></div></div>
<geo-group style="margin-top:15px" label="Elements" lw="59" tw="73" on><ui-text w="36">outlet</ui-text><ui-text w="27">inlet</ui-text></geo-group>
<geo-group style="margin-top:15px" label="Nodes" lw="41" tw="54"></geo-group>
<div class="btns"><push-btn><ui-text w="103">A<u>p</u>ply and Close</ui-text></push-btn><push-btn><ui-text w="36"><u>A</u>pply</ui-text></push-btn><push-btn><ui-text w="35">C<u>l</u>ose</ui-text></push-btn><push-btn><ui-text w="28"><u>H</u>elp</ui-text></push-btn></div></div>`);

define('task-bar',':host{display:flex;height:25px;background:#dcdad8;border-top:1px solid #fff;padding-left:5px;font-size:17px;line-height:24px}div{display:flex;align-items:center;border:1px solid;padding-left:1px}b{width:16px;height:16px;background:#000;margin-right:2px}.a{width:452px;border-color:#fff #444 #111 #fff}.c{width:453px;background:#c3b8ae;border-color:#111 #fff #fff #111;border-top-width:2px;border-left-width:2px;padding-left:2px}',
`<div class="a"><b></b><ui-text w="286">SALOME 5.1.4 - [bc_salome_day1]</ui-text></div><div class="c"><b></b><ui-text w="255">Create Groups from Geometry</ui-text></div>`);

define('salome-app',`:host{display:flex;flex-direction:column;width:1366px;height:740px;position:relative;overflow:hidden}.main{display:flex;height:593px;border-top:1px solid #777;flex:none}.split{width:7px;flex:none;display:flex;align-items:center;padding-left:1px}main-toolbar,task-bar{flex:none}.st{flex:1}.cur{position:absolute;left:715px;top:321px;z-index:3}`,
`<hub-bar></hub-bar><win-title></win-title><menu-bar></menu-bar><main-toolbar></main-toolbar>
<div class="main"><object-browser></object-browser><div class="split"><svg width="5" height="14" shape-rendering="crispEdges"><path d="M2.500 0v14" stroke="#999" stroke-width="3" stroke-dasharray="2 1"/></svg></div><view-area></view-area></div><div class="st"></div><task-bar></task-bar>
<group-dialog></group-dialog><svg class="cur" width="12" height="17"><path d="M1 0v13l3-3 2.500 6 2-1L6 9.500h3.500z" stroke="#fff" stroke-width=".4"/></svg>`);
</script>
</body>
</html>
